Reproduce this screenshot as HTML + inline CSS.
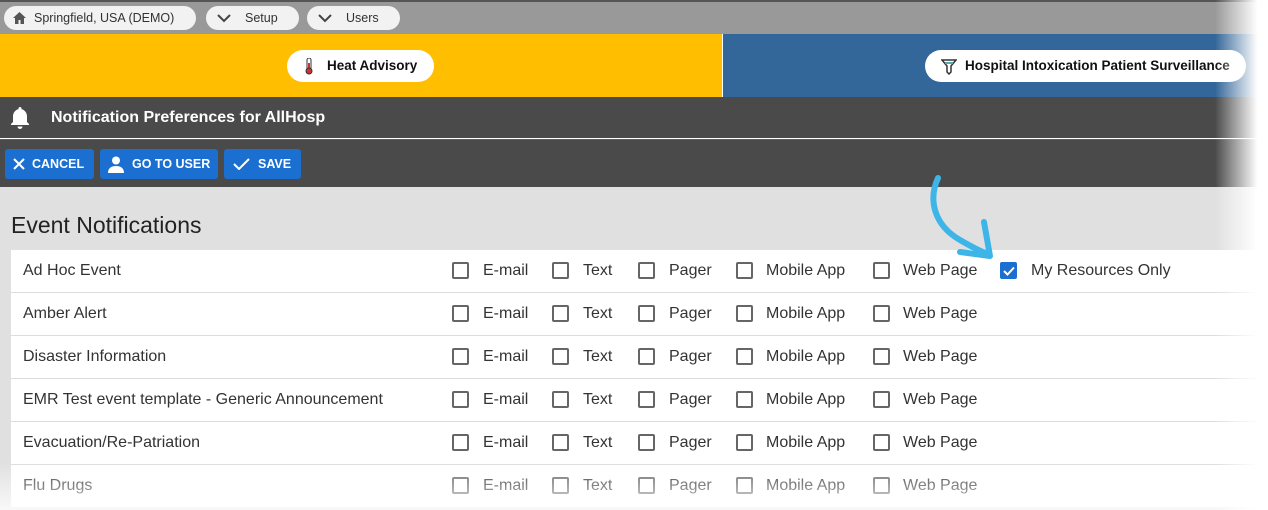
<!DOCTYPE html>
<html><head><meta charset="utf-8"><style>
*{margin:0;padding:0;box-sizing:border-box}
body{width:1268px;height:510px;overflow:hidden;position:relative;font-family:"Liberation Sans",Arial,sans-serif;background:#fff}
.top{position:absolute;left:0;top:0;width:1268px;height:34px;background:#999;border-top:2px solid #555}
.pill{position:absolute;top:6px;height:24px;background:#f2f2f2;border-radius:12px;font-size:12.5px;color:#333;line-height:24px}
.yel{position:absolute;left:0;top:34px;width:722px;height:63px;background:#ffbf00}
.blu{position:absolute;left:723px;top:34px;width:545px;height:63px;background:#336699}
.chip{position:absolute;top:50px;height:32px;background:#fff;border-radius:16px;font-weight:bold;font-size:13.5px;line-height:32px;color:#111}
.hdr{position:absolute;left:0;top:97px;width:1268px;height:41px;background:#4a4a4a;color:#fff;font-weight:bold;font-size:16px}
.tb{position:absolute;left:0;top:139px;width:1268px;height:48px;background:#4a4a4a;border-top:1px solid #5e5e5e}
.btn{position:absolute;top:9px;height:30px;background:#1a6fd0;border-radius:3px;color:#fff;font-weight:bold;font-size:12.5px;line-height:30px}
.content{position:absolute;left:0;top:187px;width:1268px;height:323px;background:#e0e0e0}
h2{position:absolute;left:11px;top:212px;font-weight:normal;font-size:23px;color:#222}
.tbl{position:absolute;left:11px;top:250px;width:1257px;background:#fff}
.row{height:43px;border-bottom:1px solid #ddd;position:relative;font-size:16px;color:#333}
.row span{position:absolute;top:12px}
.cb{position:absolute;top:12px;width:17px;height:17px;border:2px solid #666;border-radius:2px}
.cb.on{background:#1a6fd0;border-color:#1a6fd0}
.fadeR{position:absolute;left:1215px;top:0;width:53px;height:510px;background:linear-gradient(to right,rgba(255,255,255,0),#fff 80%)}
.fadeB{position:absolute;left:0;top:462px;width:1268px;height:48px;background:linear-gradient(rgba(255,255,255,0),rgba(255,255,255,.8))}
</style></head><body>
<div class="top"></div>
<div class="pill" style="left:4px;width:192px"><svg style="position:absolute;left:9px;top:6px" width="13" height="12" viewBox="0 0 13 12"><path d="M6.5 0L0 6h2v6h3.5V8h2v4H11V6h2z" fill="#555"/></svg><span style="position:absolute;left:30px">Springfield, USA (DEMO)</span></div>
<div class="pill" style="left:206px;width:93px"><svg style="position:absolute;left:11px;top:8px" width="14" height="9"><path d="M1 1l6 6 6-6" stroke="#444" stroke-width="2" fill="none"/></svg><span style="position:absolute;left:39px">Setup</span></div>
<div class="pill" style="left:307px;width:93px"><svg style="position:absolute;left:11px;top:8px" width="14" height="9"><path d="M1 1l6 6 6-6" stroke="#444" stroke-width="2" fill="none"/></svg><span style="position:absolute;left:39px">Users</span></div>
<div class="yel"></div><div class="blu"></div>
<div class="chip" style="left:287px;width:147px"><svg style="position:absolute;left:17px;top:8px" width="10" height="17"><rect x="3" y="0" width="4" height="12" rx="2" fill="#fff" stroke="#333"/><rect x="4" y="5" width="2" height="8" fill="#c33"/><circle cx="5" cy="13" r="3" fill="#c33" stroke="#333"/></svg><span style="position:absolute;left:40px">Heat Advisory</span></div>
<div class="chip" style="left:925px;width:321px"><svg style="position:absolute;left:16px;top:8px" width="16" height="17"><path d="M1 2h14l-5 6v6l-2 2-2-2V8z" fill="none" stroke="#333" stroke-width="1.5"/><path d="M4 5h8" stroke="#5aa" stroke-width="2"/></svg><span style="position:absolute;left:40px">Hospital Intoxication Patient Surveillance</span></div>
<div class="hdr"><svg style="position:absolute;left:9px;top:9px" width="22" height="24" viewBox="0 0 22 24"><path d="M11 1c-1 0-1.5.7-1.5 1.5v.6C6 4 4 7 4 10.5V16l-2 2v1h18v-1l-2-2v-5.5C18 7 16 4 12.5 3.1v-.6C12.5 1.7 12 1 11 1zM8.5 20.5a2.5 2.5 0 005 0z" fill="#fff"/></svg><span style="position:absolute;left:51px;top:12px">Notification Preferences for AllHosp</span></div>
<div class="tb">
<div class="btn" style="left:5px;width:89px"><svg style="position:absolute;left:8px;top:9px" width="12" height="12"><path d="M1 1l10 10M11 1L1 11" stroke="#fff" stroke-width="2"/></svg><span style="position:absolute;left:27px">CANCEL</span></div>
<div class="btn" style="left:100px;width:118px"><svg style="position:absolute;left:8px;top:7px" width="16" height="17"><circle cx="8" cy="4.5" r="4" fill="#fff"/><path d="M0 17c0-5 3.5-7 8-7s8 2 8 7z" fill="#fff"/></svg><span style="position:absolute;left:32px">GO TO USER</span></div>
<div class="btn" style="left:224px;width:77px"><svg style="position:absolute;left:9px;top:9px" width="17" height="12"><path d="M1 6l5 5L16 1" stroke="#fff" stroke-width="2" fill="none"/></svg><span style="position:absolute;left:34px">SAVE</span></div>
</div>
<div class="content"></div>
<h2>Event Notifications</h2>
<div class="tbl">
<div class="row"><span style="left:12px">Ad Hoc Event</span><i class="cb" style="left:441px"></i><span style="left:472px">E-mail</span><i class="cb" style="left:541px"></i><span style="left:572px">Text</span><i class="cb" style="left:627px"></i><span style="left:658px">Pager</span><i class="cb" style="left:725px"></i><span style="left:755px">Mobile App</span><i class="cb" style="left:862px"></i><span style="left:892px">Web Page</span><i class="cb on" style="left:989px"><svg style="position:absolute;left:1px;top:2px" width="12" height="10"><path d="M1 5l3.5 3.5L11 1.5" stroke="#fff" stroke-width="2" fill="none"/></svg></i><span style="left:1020px">My Resources Only</span></div>
<div class="row"><span style="left:12px">Amber Alert</span><i class="cb" style="left:441px"></i><span style="left:472px">E-mail</span><i class="cb" style="left:541px"></i><span style="left:572px">Text</span><i class="cb" style="left:627px"></i><span style="left:658px">Pager</span><i class="cb" style="left:725px"></i><span style="left:755px">Mobile App</span><i class="cb" style="left:862px"></i><span style="left:892px">Web Page</span></div>
<div class="row"><span style="left:12px">Disaster Information</span><i class="cb" style="left:441px"></i><span style="left:472px">E-mail</span><i class="cb" style="left:541px"></i><span style="left:572px">Text</span><i class="cb" style="left:627px"></i><span style="left:658px">Pager</span><i class="cb" style="left:725px"></i><span style="left:755px">Mobile App</span><i class="cb" style="left:862px"></i><span style="left:892px">Web Page</span></div>
<div class="row"><span style="left:12px">EMR Test event template - Generic Announcement</span><i class="cb" style="left:441px"></i><span style="left:472px">E-mail</span><i class="cb" style="left:541px"></i><span style="left:572px">Text</span><i class="cb" style="left:627px"></i><span style="left:658px">Pager</span><i class="cb" style="left:725px"></i><span style="left:755px">Mobile App</span><i class="cb" style="left:862px"></i><span style="left:892px">Web Page</span></div>
<div class="row"><span style="left:12px">Evacuation/Re-Patriation</span><i class="cb" style="left:441px"></i><span style="left:472px">E-mail</span><i class="cb" style="left:541px"></i><span style="left:572px">Text</span><i class="cb" style="left:627px"></i><span style="left:658px">Pager</span><i class="cb" style="left:725px"></i><span style="left:755px">Mobile App</span><i class="cb" style="left:862px"></i><span style="left:892px">Web Page</span></div>
<div class="row"><span style="left:12px">Flu Drugs</span><i class="cb" style="left:441px"></i><span style="left:472px">E-mail</span><i class="cb" style="left:541px"></i><span style="left:572px">Text</span><i class="cb" style="left:627px"></i><span style="left:658px">Pager</span><i class="cb" style="left:725px"></i><span style="left:755px">Mobile App</span><i class="cb" style="left:862px"></i><span style="left:892px">Web Page</span></div>
</div>
<div class="fadeR"></div>
<div class="fadeB"></div>
<svg style="position:absolute;left:920px;top:170px" width="80" height="100"><path d="M18 8C8 30 14 55 40 70 52 77 62 82 68 84" stroke="#3db5e8" stroke-width="6" fill="none" stroke-linecap="round"/><path d="M40 82L70 86 64 52" stroke="#3db5e8" stroke-width="6" fill="none" stroke-linecap="round" stroke-linejoin="round"/></svg>
</body></html>
